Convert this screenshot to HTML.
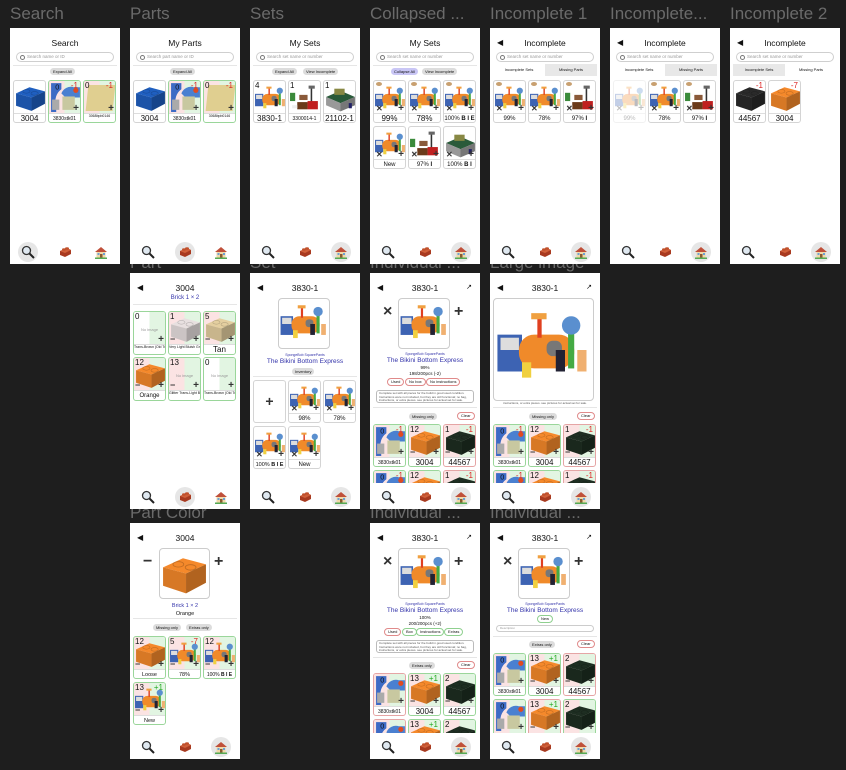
<!DOCTYPE html>
<html><head><meta charset="utf-8">
<style>
*{margin:0;padding:0;box-sizing:border-box}
body{width:846px;height:770px;background:#1e1e1e;position:relative;overflow:hidden;font-family:"Liberation Sans",sans-serif;color:#111}
.L{position:absolute;color:#6a6a6a;font-size:17px;white-space:nowrap}
.f{position:absolute;width:110px;height:236px;background:#fff;overflow:hidden}
.a{position:absolute}
.t{position:absolute;left:0;right:0;top:10px;text-align:center;font-size:8.5px}
.bk{position:absolute;left:7px;top:10px;font-size:8px}
.ex{position:absolute;right:8px;top:10px;font-size:7px}
.sb{position:absolute;left:6px;right:6px;top:24px;height:10px;border:1px solid #cfcfcf;border-radius:5px;font-size:4.5px;color:#999;line-height:8px;padding-left:10px}
.sb:before{content:"";position:absolute;left:3px;top:2px;width:3px;height:3px;border:0.8px solid #777;border-radius:50%}
.hr{position:absolute;left:3px;right:3px;height:1px;background:#e6e6e6}
.p{position:absolute;height:7px;border-radius:4px;background:#dcdcdc;font-size:4px;line-height:7px;text-align:center;padding:0 3px;white-space:nowrap}
.po{position:absolute;height:8px;border-radius:4px;border:0.8px solid #e08a8a;font-size:4px;line-height:6.5px;text-align:center;padding:0 3px;white-space:nowrap;background:#fff}
.pg{border-color:#8fd08f}
.tl{position:absolute;width:33px;height:43px;border:1px solid #d4d4d4;border-radius:3px;overflow:hidden;background:#fff}
.im{position:absolute;left:0;top:0;width:100%;height:33px}
.lb{position:absolute;left:0;right:0;top:32px;height:11px;border-top:1px solid #ddd;font-size:8px;text-align:center;line-height:10px;white-space:nowrap;overflow:hidden}
.lb.s{font-size:5px}
.lb.xs{font-size:3.5px;line-height:5px}
.sp{background:linear-gradient(90deg,#fbe3e3 50%,#e2f5e2 50%)}
.gb{border-color:#9ad69a}
.rb{border-color:#e5a5a5}
.n{position:absolute;left:1px;top:0;font-size:8px}
.d{position:absolute;right:2px;top:0;font-size:8px;color:#d22}
.dg{color:#2a2}
.mi{position:absolute;left:1px;bottom:1px;font-size:9px;line-height:9px;font-weight:bold;color:#333}
.pl{position:absolute;right:1px;bottom:1px;font-size:10px;line-height:9px;font-weight:bold;color:#333}
.x{position:absolute;left:2px;bottom:1px;font-size:8px;line-height:8px;font-weight:bold;color:#333}
.ey{position:absolute;left:2px;top:1px;width:6px;height:4px;border-radius:50%;background:#c8a070}
svg{display:block}
.nv{position:absolute;top:214px;width:20px;height:20px;border-radius:50%}
.nv.on{background:#e6e6e6}
.nv svg{position:absolute;left:3px;top:3px}
.tab{position:absolute;left:3px;right:3px;top:36px;height:12px;background:#e8e8e8;font-size:4px;line-height:12px}
.tab span{position:absolute;top:0;width:50%;height:12px;text-align:center}
.ibox{position:absolute;border:1px solid #ccc;border-radius:4px;background:#fff;overflow:hidden}
.desc{position:absolute;left:6px;right:6px;border:0.8px solid #bbb;border-radius:3px;font-size:3px;line-height:3.6px;padding:1px 2px;color:#555}
.blue{color:#3333aa}
.big{position:absolute;font-size:16px;font-weight:bold;color:#333}
</style></head><body>
<svg width="0" height="0" style="position:absolute">
<defs>
<symbol id="br" viewBox="0 0 32 32"><polygon points="2,12 15,6 30,10 17,16" fill="currentColor"/><polygon points="2,12 17,16 17,29 2,24" fill="currentColor"/><polygon points="2,12 17,16 17,29 2,24" fill="#000" opacity=".12"/><polygon points="17,16 30,10 30,22 17,29" fill="currentColor"/><polygon points="17,16 30,10 30,22 17,29" fill="#000" opacity=".28"/><ellipse cx="12" cy="10" rx="3.5" ry="1.8" fill="currentColor" stroke="#000" stroke-opacity=".2" stroke-width=".6"/><ellipse cx="20" cy="12" rx="3.5" ry="1.8" fill="currentColor" stroke="#000" stroke-opacity=".2" stroke-width=".6"/></symbol>
<symbol id="st" viewBox="0 0 32 28"><rect x="1" y="9" width="8" height="12" fill="#3d63b3"/><rect x="2" y="10" width="6" height="4" fill="#ddd"/><rect x="8" y="9" width="18" height="11" rx="5" fill="#f08a2a"/><rect x="14" y="3" width="1.4" height="7" fill="#e04020"/><rect x="12" y="2" width="5" height="2" fill="#f0a040"/><rect x="17" y="11" width="5" height="5" rx="2" fill="#777"/><rect x="24" y="8" width="2" height="12" fill="#4a4"/><circle cx="25" cy="6" r="3" fill="#5a8fcf"/><rect x="20" y="14" width="3" height="7" fill="#223"/><rect x="27" y="14" width="3" height="7" fill="#f0b070"/><rect x="9" y="18" width="3" height="5" fill="#f0d040"/></symbol>
<symbol id="sl" viewBox="0 0 32 28"><rect x="1" y="8" width="5" height="8" fill="#3a8a3a"/><rect x="10" y="10" width="8" height="5" fill="#8a5a3a"/><rect x="21" y="2" width="1.5" height="16" fill="#333"/><rect x="19" y="1" width="6" height="3" fill="#666"/><rect x="8" y="17" width="10" height="7" fill="#6a3a1a"/><rect x="18" y="16" width="10" height="8" fill="#c02020"/><rect x="3" y="20" width="5" height="3" fill="#eee"/></symbol>
<symbol id="md" viewBox="0 0 32 28"><polygon points="2,12 16,6 30,12 16,18" fill="#2a5a3a"/><polygon points="2,12 16,18 16,26 2,20" fill="#999"/><polygon points="16,18 30,12 30,20 16,26" fill="#777"/><rect x="10" y="4" width="10" height="6" fill="#884"/><rect x="24" y="18" width="3" height="5" fill="#226"/></symbol>
<symbol id="mg" viewBox="0 0 14 14"><circle cx="5.5" cy="5.5" r="4" fill="#dfe8f0" stroke="#333" stroke-width="1.3"/><line x1="8.5" y1="8.5" x2="13" y2="13" stroke="#222" stroke-width="2"/></symbol>
<symbol id="bi" viewBox="0 0 14 14"><polygon points="2,6 9,3 13,5 13,9 7,12 2,10" fill="#a83a20"/><polygon points="2,6 9,3 13,5 7,8" fill="#d0603a"/><ellipse cx="6" cy="4.5" rx="2" ry="1.2" fill="#c0502c"/><ellipse cx="9" cy="3.5" rx="2" ry="1.2" fill="#c0502c"/></symbol>
<symbol id="ho" viewBox="0 0 14 14"><polygon points="1,7 7,2 13,7" fill="#c0503a"/><rect x="2.5" y="7" width="9" height="6" fill="#f0d8a8"/><rect x="6" y="9" width="2.5" height="4" fill="#8a5a30"/><rect x="3.5" y="8" width="2" height="2" fill="#6aa0d8"/><rect x="9" y="8" width="2" height="2" fill="#6aa0d8"/><rect x="1" y="12.5" width="12" height="1.5" fill="#5a5"/></symbol>
<symbol id="st1" viewBox="0 0 32 32"><path d="M2 2h10v6a14 14 0 0 0-5 16v6H2z" fill="#3d6bc5"/><path d="M12 12a10 10 0 0 1 12-6h6v10H16z" fill="#4a80d0"/><rect x="3" y="18" width="7" height="10" fill="#aaa"/><rect x="13" y="15" width="12" height="13" fill="#c8c8a0"/><circle cx="26" cy="9" r="2.5" fill="#e04a20"/><text x="6" y="8" font-size="7" fill="#111">0</text></symbol>
</defs></svg>

<!-- labels -->
<div class="L" style="left:10px;top:4px">Search</div>
<div class="L" style="left:130px;top:4px">Parts</div>
<div class="L" style="left:250px;top:4px">Sets</div>
<div class="L" style="left:370px;top:4px">Collapsed ...</div>
<div class="L" style="left:490px;top:4px">Incomplete 1</div>
<div class="L" style="left:610px;top:4px">Incomplete...</div>
<div class="L" style="left:730px;top:4px">Incomplete 2</div>
<div class="L" style="left:130px;top:253px">Part</div>
<div class="L" style="left:250px;top:253px">Set</div>
<div class="L" style="left:370px;top:253px">Individual ...</div>
<div class="L" style="left:490px;top:253px">Large image</div>
<div class="L" style="left:130px;top:503px">Part Color</div>
<div class="L" style="left:370px;top:503px">Individual ...</div>
<div class="L" style="left:490px;top:503px">Individual ...</div>

<!-- Search -->
<div class="f" style="left:10px;top:28px">
<div class="t">Search</div>
<div class="sb">Search name or ID</div>
<div class="hr" style="top:37px"></div>
<div class="p" style="left:40px;top:40px">Expand All</div>
<div class="tl" style="left:3px;top:52px"><div class="im"><svg width="33" height="33" style="color:#1f5fc0"><use href="#br"/></svg></div><div class="lb">3004</div></div>
<div class="tl gb" style="left:38px;top:52px"><div class="im sp"><svg width="33" height="33"><use href="#st1"/></svg><span class="d">-1</span><span class="pl">+</span></div><div class="lb s">3830stk01</div></div>
<div class="tl gb" style="left:73px;top:52px"><div class="im sp"><div class="a" style="left:3px;top:4px;width:27px;height:26px;background:#e0cf90;transform:skewX(-6deg)"></div><span class="n">0</span><span class="d">-1</span><span class="pl">+</span></div><div class="lb xs">3068bpb0146</div></div>
<div class="nv on" style="left:8px"><svg width="14" height="14"><use href="#mg"/></svg></div>
<div class="nv" style="left:45px"><svg width="14" height="14"><use href="#bi"/></svg></div>
<div class="nv" style="left:81px"><svg width="14" height="14"><use href="#ho"/></svg></div>
</div>

<!-- Parts -->
<div class="f" style="left:130px;top:28px">
<div class="t">My Parts</div>
<div class="sb">Search part name or ID</div>
<div class="hr" style="top:37px"></div>
<div class="p" style="left:40px;top:40px">Expand All</div>
<div class="tl" style="left:3px;top:52px"><div class="im"><svg width="33" height="33" style="color:#1f5fc0"><use href="#br"/></svg></div><div class="lb">3004</div></div>
<div class="tl gb" style="left:38px;top:52px"><div class="im sp"><svg width="33" height="33"><use href="#st1"/></svg><span class="d">-1</span><span class="pl">+</span></div><div class="lb s">3830stk01</div></div>
<div class="tl gb" style="left:73px;top:52px"><div class="im sp"><div class="a" style="left:3px;top:4px;width:27px;height:26px;background:#e0cf90;transform:skewX(-6deg)"></div><span class="n">0</span><span class="d">-1</span><span class="pl">+</span></div><div class="lb xs">3068bpb0146</div></div>
<div class="nv" style="left:8px"><svg width="14" height="14"><use href="#mg"/></svg></div>
<div class="nv on" style="left:45px"><svg width="14" height="14"><use href="#bi"/></svg></div>
<div class="nv" style="left:81px"><svg width="14" height="14"><use href="#ho"/></svg></div>
</div>

<!-- Sets -->
<div class="f" style="left:250px;top:28px">
<div class="t">My Sets</div>
<div class="sb">Search set name or number</div>
<div class="hr" style="top:37px"></div>
<div class="p" style="left:22px;top:40px">Expand All</div>
<div class="p" style="left:53px;top:40px">View Incomplete</div>
<div class="tl" style="left:3px;top:52px"><div class="im"><svg width="33" height="30" style="margin-top:3px"><use href="#st"/></svg><span class="n">4</span></div><div class="lb">3830-1</div></div>
<div class="tl" style="left:38px;top:52px"><div class="im"><svg width="33" height="30" style="margin-top:3px"><use href="#sl"/></svg><span class="n">1</span></div><div class="lb s">3300014-1</div></div>
<div class="tl" style="left:73px;top:52px"><div class="im"><svg width="33" height="30" style="margin-top:3px"><use href="#md"/></svg><span class="n">1</span></div><div class="lb">21102-1</div></div>
<div class="nv" style="left:8px"><svg width="14" height="14"><use href="#mg"/></svg></div>
<div class="nv" style="left:45px"><svg width="14" height="14"><use href="#bi"/></svg></div>
<div class="nv on" style="left:81px"><svg width="14" height="14"><use href="#ho"/></svg></div>
</div>

<!-- Collapsed -->
<div class="f" style="left:370px;top:28px">
<div class="t">My Sets</div>
<div class="sb">Search set name or number</div>
<div class="hr" style="top:37px"></div>
<div class="p" style="left:21px;top:40px;background:#c9c6f5">Collapse All</div>
<div class="p" style="left:52px;top:40px">View Incomplete</div>
<div class="tl" style="left:3px;top:52px"><div class="im"><svg width="33" height="30" style="margin-top:3px"><use href="#st"/></svg><span class="ey"></span><span class="x">✕</span><span class="pl">+</span></div><div class="lb">99%</div></div>
<div class="tl" style="left:38px;top:52px"><div class="im"><svg width="33" height="30" style="margin-top:3px"><use href="#st"/></svg><span class="ey"></span><span class="x">✕</span><span class="pl">+</span></div><div class="lb">78%</div></div>
<div class="tl" style="left:73px;top:52px"><div class="im"><svg width="33" height="30" style="margin-top:3px"><use href="#st"/></svg><span class="ey"></span><span class="x">✕</span><span class="pl">+</span></div><div class="lb s" style="font-size:6px">100% <b>B I E</b></div></div>
<div class="tl" style="left:3px;top:98px"><div class="im"><svg width="33" height="30" style="margin-top:3px"><use href="#st"/></svg><span class="x">✕</span><span class="pl">+</span></div><div class="lb s" style="font-size:6px">New</div></div>
<div class="tl" style="left:38px;top:98px"><div class="im"><svg width="33" height="30" style="margin-top:3px"><use href="#sl"/></svg><span class="x">✕</span><span class="pl">+</span></div><div class="lb s" style="font-size:6px">97% <b>I</b></div></div>
<div class="tl" style="left:73px;top:98px"><div class="im"><svg width="33" height="30" style="margin-top:3px"><use href="#md"/></svg><span class="x">✕</span><span class="pl">+</span></div><div class="lb s" style="font-size:6px">100% <b>B I</b></div></div>
<div class="nv" style="left:8px"><svg width="14" height="14"><use href="#mg"/></svg></div>
<div class="nv" style="left:45px"><svg width="14" height="14"><use href="#bi"/></svg></div>
<div class="nv on" style="left:81px"><svg width="14" height="14"><use href="#ho"/></svg></div>
</div>

<!-- Incomplete 1 -->
<div class="f" style="left:490px;top:28px">
<div class="bk">◀</div><div class="t">Incomplete</div>
<div class="sb">Search set name or number</div>
<div class="tab"><span style="left:0;background:#fff">Incomplete Sets</span><span style="left:50%">Missing Parts</span></div>
<div class="tl" style="left:3px;top:52px"><div class="im"><svg width="33" height="30" style="margin-top:3px"><use href="#st"/></svg><span class="ey"></span><span class="x">✕</span><span class="pl">+</span></div><div class="lb s" style="font-size:6px">99%</div></div>
<div class="tl" style="left:38px;top:52px"><div class="im"><svg width="33" height="30" style="margin-top:3px"><use href="#st"/></svg><span class="ey"></span><span class="x">✕</span><span class="pl">+</span></div><div class="lb s" style="font-size:6px">78%</div></div>
<div class="tl" style="left:73px;top:52px"><div class="im"><svg width="33" height="30" style="margin-top:3px"><use href="#sl"/></svg><span class="ey"></span><span class="x">✕</span><span class="pl">+</span></div><div class="lb s" style="font-size:6px">97% <b>I</b></div></div>
<div class="nv" style="left:8px"><svg width="14" height="14"><use href="#mg"/></svg></div>
<div class="nv" style="left:45px"><svg width="14" height="14"><use href="#bi"/></svg></div>
<div class="nv on" style="left:81px"><svg width="14" height="14"><use href="#ho"/></svg></div>
</div>

<!-- Incomplete... -->
<div class="f" style="left:610px;top:28px">
<div class="bk">◀</div><div class="t">Incomplete</div>
<div class="sb">Search set name or number</div>
<div class="tab"><span style="left:0;background:#fff">Incomplete Sets</span><span style="left:50%">Missing Parts</span></div>
<div class="tl" style="left:3px;top:52px;opacity:.3"><div class="im"><svg width="33" height="30" style="margin-top:3px"><use href="#st"/></svg><span class="x">✕</span><span class="pl">+</span></div><div class="lb s" style="font-size:6px">99%</div></div>
<div class="tl" style="left:38px;top:52px"><div class="im"><svg width="33" height="30" style="margin-top:3px"><use href="#st"/></svg><span class="ey"></span><span class="x">✕</span><span class="pl">+</span></div><div class="lb s" style="font-size:6px">78%</div></div>
<div class="tl" style="left:73px;top:52px"><div class="im"><svg width="33" height="30" style="margin-top:3px"><use href="#sl"/></svg><span class="ey"></span><span class="x">✕</span><span class="pl">+</span></div><div class="lb s" style="font-size:6px">97% <b>I</b></div></div>
<div class="nv" style="left:8px"><svg width="14" height="14"><use href="#mg"/></svg></div>
<div class="nv" style="left:45px"><svg width="14" height="14"><use href="#bi"/></svg></div>
<div class="nv on" style="left:81px"><svg width="14" height="14"><use href="#ho"/></svg></div>
</div>

<!-- Incomplete 2 -->
<div class="f" style="left:730px;top:28px">
<div class="bk">◀</div><div class="t">Incomplete</div>
<div class="sb">Search set name or number</div>
<div class="tab"><span style="left:0">Incomplete Sets</span><span style="left:50%;background:#fff">Missing Parts</span></div>
<div class="tl" style="left:3px;top:52px"><div class="im"><svg width="33" height="33" style="color:#2a2a2a"><use href="#br"/></svg><span class="d">-1</span></div><div class="lb">44567</div></div>
<div class="tl" style="left:38px;top:52px"><div class="im"><svg width="33" height="33" style="color:#f5892b"><use href="#br"/></svg><span class="d">-7</span></div><div class="lb">3004</div></div>
<div class="nv" style="left:8px"><svg width="14" height="14"><use href="#mg"/></svg></div>
<div class="nv" style="left:45px"><svg width="14" height="14"><use href="#bi"/></svg></div>
<div class="nv on" style="left:81px"><svg width="14" height="14"><use href="#ho"/></svg></div>
</div>

<!-- Part -->
<div class="f" style="left:130px;top:273px">
<div class="bk">◀</div><div class="t">3004</div>
<div class="a blue" style="left:0;right:0;top:22px;text-align:center;font-size:6px">Brick 1 × 2</div>
<div class="hr" style="top:31px"></div>
<div class="tl gb" style="left:3px;top:38px;height:44px"><div class="im sp" style="background:linear-gradient(90deg,#fff 50%,#e2f5e2 50%)"><span class="n">0</span><div class="a" style="left:0;right:0;top:15px;text-align:center;font-size:4px;color:#999">No image</div><span class="pl">+</span></div><div class="lb xs">Trans-Brown (Old Trans-Black)</div></div>
<div class="tl gb" style="left:38px;top:38px;height:44px"><div class="im sp"><svg width="33" height="33" style="color:#e8e0e0"><use href="#br"/></svg><span class="n">1</span><span class="mi">−</span><span class="pl">+</span></div><div class="lb xs">Very Light Bluish Gray</div></div>
<div class="tl gb" style="left:73px;top:38px;height:44px"><div class="im sp"><svg width="33" height="33" style="color:#e4cfa0"><use href="#br"/></svg><span class="n">5</span><span class="mi">−</span><span class="pl">+</span></div><div class="lb">Tan</div></div>
<div class="tl gb" style="left:3px;top:84px;height:44px"><div class="im sp"><svg width="33" height="33" style="color:#f5892b"><use href="#br"/></svg><span class="n">12</span><span class="mi">−</span><span class="pl">+</span></div><div class="lb s" style="font-size:6px">Orange</div></div>
<div class="tl gb" style="left:38px;top:84px;height:44px"><div class="im sp"><span class="n">13</span><div class="a" style="left:0;right:0;top:15px;text-align:center;font-size:4px;color:#999">No image</div><span class="mi">−</span><span class="pl">+</span></div><div class="lb xs">Glitter Trans-Light Blue</div></div>
<div class="tl gb" style="left:73px;top:84px;height:44px"><div class="im sp" style="background:linear-gradient(90deg,#fff 50%,#e2f5e2 50%)"><span class="n">0</span><div class="a" style="left:0;right:0;top:15px;text-align:center;font-size:4px;color:#999">No image</div><span class="pl">+</span></div><div class="lb xs">Trans-Brown (Old Trans-Black)</div></div>
<div class="nv" style="left:8px"><svg width="14" height="14"><use href="#mg"/></svg></div>
<div class="nv on" style="left:45px"><svg width="14" height="14"><use href="#bi"/></svg></div>
<div class="nv" style="left:81px"><svg width="14" height="14"><use href="#ho"/></svg></div>
</div>

<!-- Set -->
<div class="f" style="left:250px;top:273px">
<div class="bk">◀</div><div class="t">3830-1</div>
<div class="ibox" style="left:28px;top:25px;width:52px;height:51px"><svg width="50" height="44" style="margin-top:3px"><use href="#st"/></svg></div>
<div class="a blue" style="left:0;right:0;top:80px;text-align:center;font-size:3.5px">SpongeBob SquarePants</div>
<div class="a blue" style="left:0;right:0;top:85px;text-align:center;font-size:6.5px">The Bikini Bottom Express</div>
<div class="p" style="left:42px;top:95px">Inventory</div>
<div class="hr" style="top:103px"></div>
<div class="tl" style="left:3px;top:107px"><div class="a" style="left:0;right:0;top:12px;text-align:center;font-size:14px;font-weight:bold;color:#333">+</div></div>
<div class="tl" style="left:38px;top:107px"><div class="im"><svg width="33" height="30" style="margin-top:3px"><use href="#st"/></svg><span class="x">✕</span><span class="pl">+</span></div><div class="lb s" style="font-size:6px">98%</div></div>
<div class="tl" style="left:73px;top:107px"><div class="im"><svg width="33" height="30" style="margin-top:3px"><use href="#st"/></svg><span class="x">✕</span><span class="pl">+</span></div><div class="lb s" style="font-size:6px">78%</div></div>
<div class="tl" style="left:3px;top:153px"><div class="im"><svg width="33" height="30" style="margin-top:3px"><use href="#st"/></svg><span class="x">✕</span><span class="pl">+</span></div><div class="lb s" style="font-size:5.5px">100% <b>B I E</b></div></div>
<div class="tl" style="left:38px;top:153px"><div class="im"><svg width="33" height="30" style="margin-top:3px"><use href="#st"/></svg><span class="x">✕</span><span class="pl">+</span></div><div class="lb s" style="font-size:6px">New</div></div>
<div class="nv" style="left:8px"><svg width="14" height="14"><use href="#mg"/></svg></div>
<div class="nv" style="left:45px"><svg width="14" height="14"><use href="#bi"/></svg></div>
<div class="nv on" style="left:81px"><svg width="14" height="14"><use href="#ho"/></svg></div>
</div>

<!-- Individual row2 -->
<div class="f" style="left:370px;top:273px">
<div class="bk">◀</div><div class="t">3830-1</div><div class="ex">↗</div>
<div class="big" style="left:13px;top:30px">×</div><div class="big" style="left:84px;top:30px">+</div>
<div class="ibox" style="left:28px;top:25px;width:52px;height:51px"><svg width="50" height="44" style="margin-top:3px"><use href="#st"/></svg></div>
<div class="a blue" style="left:0;right:0;top:79px;text-align:center;font-size:3.5px">SpongeBob SquarePants</div>
<div class="a blue" style="left:0;right:0;top:84px;text-align:center;font-size:6.5px">The Bikini Bottom Express</div>
<div class="a" style="left:0;right:0;top:92px;text-align:center;font-size:4.5px">99%</div>
<div class="a" style="left:0;right:0;top:98px;text-align:center;font-size:4.5px">198/200pcs (-2)</div>
<div class="po" style="left:17px;top:105px">Used</div><div class="po" style="left:35px;top:105px">No box</div><div class="po" style="left:56px;top:105px">No instructions</div>
<div class="desc" style="top:117px;height:13px">Complete set with all pieces for the build in good used condition. Instructions were not included, but they are still functional; no bag, instructions, or extra pieces. see pictures for actual set for sale.</div>
<div class="hr" style="top:134px"></div>
<div class="p" style="left:39px;top:140px">Missing only</div><div class="po" style="left:87px;top:139px">Clear</div>
<div class="tl gb" style="left:3px;top:151px"><div class="im sp"><svg width="33" height="33"><use href="#st1"/></svg><span class="d">-1</span><span class="pl">+</span></div><div class="lb s">3830stk01</div></div>
<div class="tl gb" style="left:38px;top:151px"><div class="im sp"><svg width="33" height="33" style="color:#f5892b"><use href="#br"/></svg><span class="n">12</span><span class="mi">−</span><span class="pl">+</span></div><div class="lb">3004</div></div>
<div class="tl rb" style="left:73px;top:151px"><div class="im sp"><svg width="33" height="33" style="color:#1e2e22"><use href="#br"/></svg><span class="n">1</span><span class="d">-1</span><span class="mi">−</span><span class="pl">+</span></div><div class="lb">44567</div></div>
<div class="tl gb" style="left:3px;top:197px"><div class="im sp"><svg width="33" height="33"><use href="#st1"/></svg><span class="d">-1</span></div></div>
<div class="tl gb" style="left:38px;top:197px"><div class="im sp"><svg width="33" height="33" style="color:#f5892b"><use href="#br"/></svg><span class="n">12</span></div></div>
<div class="tl rb" style="left:73px;top:197px"><div class="im sp"><svg width="33" height="33" style="color:#1e2e22"><use href="#br"/></svg><span class="n">1</span><span class="d">-1</span></div></div>
<div class="a" style="left:0;right:0;top:210px;height:26px;background:#fff"></div>
<div class="nv" style="left:8px"><svg width="14" height="14"><use href="#mg"/></svg></div>
<div class="nv" style="left:45px"><svg width="14" height="14"><use href="#bi"/></svg></div>
<div class="nv on" style="left:81px"><svg width="14" height="14"><use href="#ho"/></svg></div>
</div>

<!-- Large image -->
<div class="f" style="left:490px;top:273px">
<div class="bk">◀</div><div class="t">3830-1</div><div class="ex">↗</div>
<div class="ibox" style="left:3px;top:25px;width:101px;height:103px"><svg width="99" height="86" style="margin-top:8px"><use href="#st"/></svg></div>
<div class="a" style="left:0;right:0;top:128px;text-align:center;font-size:3px;color:#555">instructions, or extra pieces. see pictures for actual set for sale.</div>
<div class="hr" style="top:134px"></div>
<div class="p" style="left:39px;top:140px">Missing only</div><div class="po" style="left:87px;top:139px">Clear</div>
<div class="tl gb" style="left:3px;top:151px"><div class="im sp"><svg width="33" height="33"><use href="#st1"/></svg><span class="d">-1</span><span class="pl">+</span></div><div class="lb s">3830stk01</div></div>
<div class="tl gb" style="left:38px;top:151px"><div class="im sp"><svg width="33" height="33" style="color:#f5892b"><use href="#br"/></svg><span class="n">12</span><span class="mi">−</span><span class="pl">+</span></div><div class="lb">3004</div></div>
<div class="tl rb" style="left:73px;top:151px"><div class="im sp"><svg width="33" height="33" style="color:#1e2e22"><use href="#br"/></svg><span class="n">1</span><span class="d">-1</span><span class="mi">−</span><span class="pl">+</span></div><div class="lb">44567</div></div>
<div class="tl gb" style="left:3px;top:197px"><div class="im sp"><svg width="33" height="33"><use href="#st1"/></svg><span class="d">-1</span></div></div>
<div class="tl gb" style="left:38px;top:197px"><div class="im sp"><svg width="33" height="33" style="color:#f5892b"><use href="#br"/></svg><span class="n">12</span></div></div>
<div class="tl rb" style="left:73px;top:197px"><div class="im sp"><svg width="33" height="33" style="color:#1e2e22"><use href="#br"/></svg><span class="n">1</span><span class="d">-1</span></div></div>
<div class="a" style="left:0;right:0;top:210px;height:26px;background:#fff"></div>
<div class="nv" style="left:8px"><svg width="14" height="14"><use href="#mg"/></svg></div>
<div class="nv" style="left:45px"><svg width="14" height="14"><use href="#bi"/></svg></div>
<div class="nv on" style="left:81px"><svg width="14" height="14"><use href="#ho"/></svg></div>
</div>

<!-- Part Color -->
<div class="f" style="left:130px;top:523px">
<div class="bk">◀</div><div class="t">3004</div>
<div class="big" style="left:13px;top:30px">−</div><div class="big" style="left:84px;top:30px">+</div>
<div class="ibox" style="left:29px;top:25px;width:51px;height:51px"><svg width="49" height="49" style="color:#f5892b"><use href="#br"/></svg></div>
<div class="a blue" style="left:0;right:0;top:80px;text-align:center;font-size:5.5px">Brick 1 × 2</div>
<div class="a" style="left:0;right:0;top:88px;text-align:center;font-size:5.5px">Orange</div>
<div class="hr" style="top:95px"></div>
<div class="p" style="left:23px;top:101px">Missing only</div><div class="p" style="left:56px;top:101px">Extras only</div>
<div class="tl gb" style="left:3px;top:113px"><div class="im sp"><svg width="33" height="33" style="color:#f5892b"><use href="#br"/></svg><span class="n">12</span><span class="mi">−</span><span class="pl">+</span></div><div class="lb s" style="font-size:5.5px">Loose</div></div>
<div class="tl gb" style="left:38px;top:113px"><div class="im sp"><svg width="33" height="30" style="margin-top:3px"><use href="#st"/></svg><span class="n">5</span><span class="d">-7</span><span class="mi">−</span><span class="pl">+</span></div><div class="lb s" style="font-size:5.5px">78%</div></div>
<div class="tl gb" style="left:73px;top:113px"><div class="im sp"><svg width="33" height="30" style="margin-top:3px"><use href="#st"/></svg><span class="n">12</span><span class="mi">−</span><span class="pl">+</span></div><div class="lb s" style="font-size:5px">100% <b>B I E</b></div></div>
<div class="tl gb" style="left:3px;top:159px"><div class="im sp"><svg width="33" height="30" style="margin-top:3px"><use href="#st"/></svg><span class="n">13</span><span class="d dg">+1</span><span class="mi">−</span><span class="pl">+</span></div><div class="lb s" style="font-size:5.5px">New</div></div>
<div class="nv" style="left:8px"><svg width="14" height="14"><use href="#mg"/></svg></div>
<div class="nv" style="left:45px"><svg width="14" height="14"><use href="#bi"/></svg></div>
<div class="nv on" style="left:81px"><svg width="14" height="14"><use href="#ho"/></svg></div>
</div>

<!-- Individual row3 a -->
<div class="f" style="left:370px;top:523px">
<div class="bk">◀</div><div class="t">3830-1</div><div class="ex">↗</div>
<div class="big" style="left:13px;top:30px">×</div><div class="big" style="left:84px;top:30px">+</div>
<div class="ibox" style="left:28px;top:25px;width:52px;height:51px"><svg width="50" height="44" style="margin-top:3px"><use href="#st"/></svg></div>
<div class="a blue" style="left:0;right:0;top:79px;text-align:center;font-size:3.5px">SpongeBob SquarePants</div>
<div class="a blue" style="left:0;right:0;top:84px;text-align:center;font-size:6.5px">The Bikini Bottom Express</div>
<div class="a" style="left:0;right:0;top:92px;text-align:center;font-size:4.5px">100%</div>
<div class="a" style="left:0;right:0;top:98px;text-align:center;font-size:4.5px">200/200pcs (+2)</div>
<div class="po" style="left:14px;top:105px">Used</div><div class="po pg" style="left:32px;top:105px">Box</div><div class="po pg" style="left:46px;top:105px">Instructions</div><div class="po pg" style="left:74px;top:105px">Extras</div>
<div class="desc" style="top:117px;height:13px">Complete set with all pieces for the build in good used condition. Instructions were not included, but they are still functional; no bag, instructions, or extra pieces. see pictures for actual set for sale.</div>
<div class="hr" style="top:134px"></div>
<div class="p" style="left:39px;top:139px">Extras only</div><div class="po" style="left:87px;top:138px">Clear</div>
<div class="tl rb" style="left:3px;top:150px"><div class="im sp"><svg width="33" height="33"><use href="#st1"/></svg><span class="pl">+</span></div><div class="lb s">3830stk01</div></div>
<div class="tl gb" style="left:38px;top:150px"><div class="im sp"><svg width="33" height="33" style="color:#f5892b"><use href="#br"/></svg><span class="n">13</span><span class="d dg">+1</span><span class="mi">−</span><span class="pl">+</span></div><div class="lb">3004</div></div>
<div class="tl gb" style="left:73px;top:150px"><div class="im sp"><svg width="33" height="33" style="color:#1e2e22"><use href="#br"/></svg><span class="n">2</span><span class="mi">−</span><span class="pl">+</span></div><div class="lb">44567</div></div>
<div class="tl rb" style="left:3px;top:196px"><div class="im sp"><svg width="33" height="33"><use href="#st1"/></svg></div></div>
<div class="tl gb" style="left:38px;top:196px"><div class="im sp"><svg width="33" height="33" style="color:#f5892b"><use href="#br"/></svg><span class="n">13</span><span class="d dg">+1</span></div></div>
<div class="tl gb" style="left:73px;top:196px"><div class="im sp"><svg width="33" height="33" style="color:#1e2e22"><use href="#br"/></svg><span class="n">2</span></div></div>
<div class="a" style="left:0;right:0;top:210px;height:26px;background:#fff"></div>
<div class="nv" style="left:8px"><svg width="14" height="14"><use href="#mg"/></svg></div>
<div class="nv" style="left:45px"><svg width="14" height="14"><use href="#bi"/></svg></div>
<div class="nv on" style="left:81px"><svg width="14" height="14"><use href="#ho"/></svg></div>
</div>

<!-- Individual row3 b -->
<div class="f" style="left:490px;top:523px">
<div class="bk">◀</div><div class="t">3830-1</div><div class="ex">↗</div>
<div class="big" style="left:13px;top:30px">×</div><div class="big" style="left:84px;top:30px">+</div>
<div class="ibox" style="left:28px;top:25px;width:52px;height:51px"><svg width="50" height="44" style="margin-top:3px"><use href="#st"/></svg></div>
<div class="a blue" style="left:0;right:0;top:79px;text-align:center;font-size:3.5px">SpongeBob SquarePants</div>
<div class="a blue" style="left:0;right:0;top:84px;text-align:center;font-size:6.5px">The Bikini Bottom Express</div>
<div class="po pg" style="left:47px;top:92px">New</div>
<div class="a" style="left:6px;right:6px;top:102px;height:7px;border:0.8px solid #ccc;border-radius:4px;font-size:3px;line-height:5px;color:#999;padding-left:3px">Description</div>
<div class="hr" style="top:113px"></div>
<div class="p" style="left:39px;top:118px">Extras only</div><div class="po" style="left:87px;top:117px">Clear</div>
<div class="tl gb" style="left:3px;top:130px"><div class="im sp"><svg width="33" height="33"><use href="#st1"/></svg><span class="pl">+</span></div><div class="lb s">3830stk01</div></div>
<div class="tl gb" style="left:38px;top:130px"><div class="im sp"><svg width="33" height="33" style="color:#f5892b"><use href="#br"/></svg><span class="n">13</span><span class="d dg">+1</span><span class="mi">−</span><span class="pl">+</span></div><div class="lb">3004</div></div>
<div class="tl rb" style="left:73px;top:130px"><div class="im sp"><svg width="33" height="33" style="color:#1e2e22"><use href="#br"/></svg><span class="n">2</span><span class="mi">−</span><span class="pl">+</span></div><div class="lb">44567</div></div>
<div class="tl gb" style="left:3px;top:176px"><div class="im sp"><svg width="33" height="33"><use href="#st1"/></svg><span class="pl">+</span></div></div>
<div class="tl rb" style="left:38px;top:176px"><div class="im sp"><svg width="33" height="33" style="color:#f5892b"><use href="#br"/></svg><span class="n">13</span><span class="d dg">+1</span><span class="mi">−</span><span class="pl">+</span></div></div>
<div class="tl gb" style="left:73px;top:176px"><div class="im sp"><svg width="33" height="33" style="color:#1e2e22"><use href="#br"/></svg><span class="n">2</span><span class="mi">−</span><span class="pl">+</span></div></div>
<div class="a" style="left:0;right:0;top:210px;height:26px;background:#fff"></div>
<div class="nv" style="left:8px"><svg width="14" height="14"><use href="#mg"/></svg></div>
<div class="nv" style="left:45px"><svg width="14" height="14"><use href="#bi"/></svg></div>
<div class="nv on" style="left:81px"><svg width="14" height="14"><use href="#ho"/></svg></div>
</div>
</body></html>
